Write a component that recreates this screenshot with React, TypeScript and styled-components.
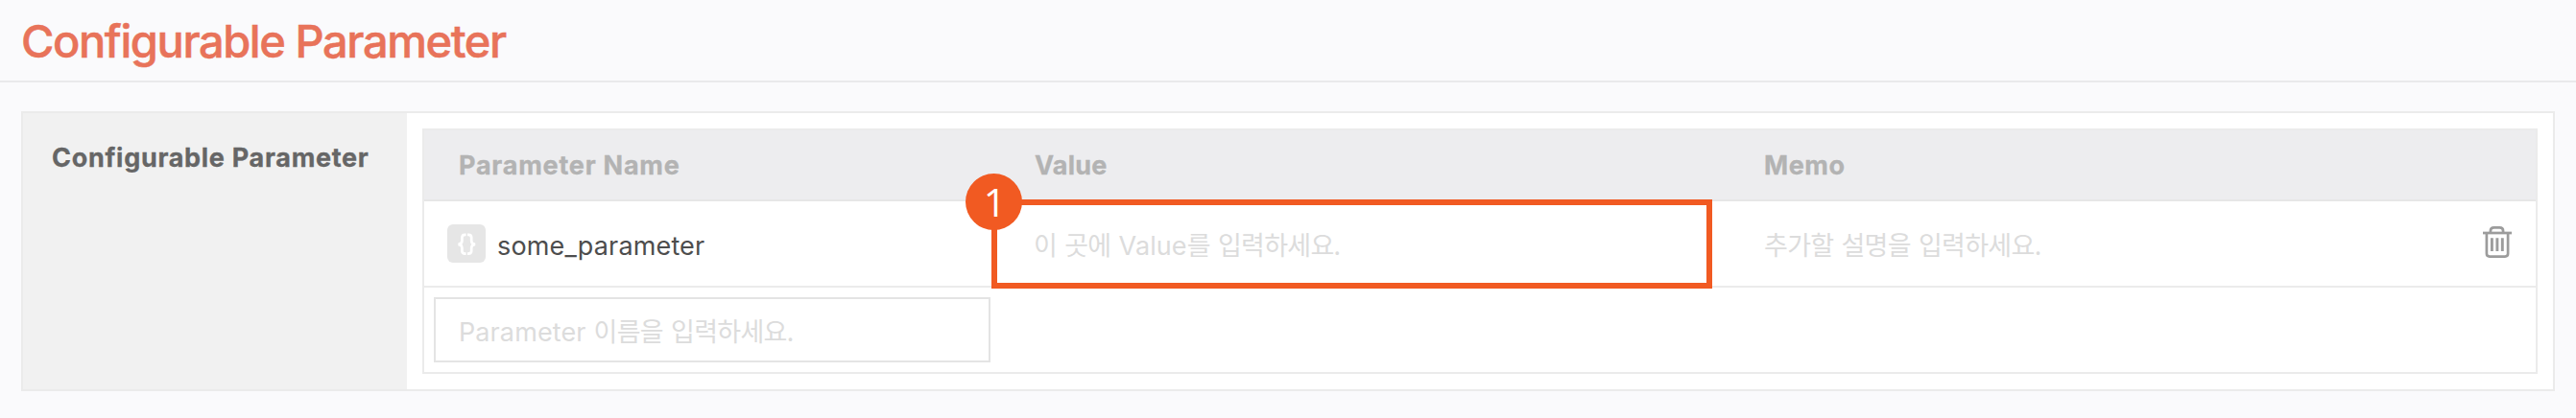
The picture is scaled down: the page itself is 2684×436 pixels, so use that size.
import React from 'react';
import styled, { createGlobalStyle } from 'styled-components';

const GlobalStyle = createGlobalStyle`
  *, *::before, *::after { box-sizing: border-box; }
  body {
    margin: 0;
    background: #fafafc;
    font-family: Inter, 'Noto Sans CJK KR', sans-serif;
    font-size: 27px;
    line-height: 34px;
  }
`;

const Page = styled.main`
  height: 436px;
  overflow: hidden;
  background: #fafafc;
`;

const TitleBar = styled.header`
  height: 86px;
  padding: 2px 22px 0;
  display: flex;
  align-items: center;
  border-bottom: 2px solid #e9e9eb;
`;

const Title = styled.h1`
  margin: 0;
  font-size: 47px;
  font-weight: 500;
  line-height: 56px;
  letter-spacing: -1.42px;
  color: #e8735a;
  -webkit-text-stroke: 0.5px #e8735a;
`;

const Panel = styled.section`
  margin: 30px 22px 0;
  height: 292px;
  display: flex;
  border: 2px solid #ebebeb;
  background: #fff;
`;

const PanelLabel = styled.div`
  width: 400px;
  flex: none;
  padding: 30px 0 0 30px;
  background: #f1f1f1;
  color: #666;
  font-weight: 700;
  letter-spacing: 0.7px;
  -webkit-text-stroke: 0.3px currentColor;
`;

const PanelBody = styled.div`
  flex: 1;
  padding: 16px;
`;

const Table = styled.div`
  border: 2px solid #ebebeb;
`;

const Row = styled.div<{ $height: number; $last?: boolean }>`
  display: grid;
  grid-template-columns: 591px 751px 1fr auto;
  align-items: stretch;
  height: ${(p) => p.$height}px;
  border-bottom: ${(p) => (p.$last ? 'none' : '2px solid #ebebeb')};
`;

const HeadRow = styled(Row)`
  padding-top: 2px;
  background: #ededef;
  border-bottom-color: #e6e6e6;
  color: #b3b3b3;
  font-weight: 700;
  -webkit-text-stroke: 0.3px currentColor;
`;

const Cell = styled.div<{ $indent: number; $spacing?: number }>`
  position: relative;
  display: flex;
  align-items: center;
  padding-left: ${(p) => p.$indent}px;
  letter-spacing: ${(p) => p.$spacing ?? 0}px;
`;

const Name = styled.span`
  margin: 5px 0 0 12px;
  color: #4d4d4d;
  letter-spacing: 0.15px;
`;

const Placeholder = styled.span`
  padding-top: 5px;
  color: #dcdcdc;
  letter-spacing: 0.1px;
  white-space: pre;
`;

const Korean = styled.span`
  font-family: 'Noto Sans CJK KR', sans-serif;
  line-height: 0;
  letter-spacing: -0.7px;
  word-spacing: 2.7px;
`;

const NameInput = styled.div`
  width: 580px;
  height: 68px;
  margin: 10px;
  padding-left: 24px;
  display: flex;
  align-items: center;
  border: 2px solid #e4e4e4;
`;

const Badge = styled.span`
  width: 40px;
  height: 40px;
  display: flex;
  border-radius: 6px;
  background: #e6e6e6;
`;

const Highlight = styled.div`
  position: absolute;
  inset: -2px 0 -3px 0;
  border: 6px solid #f15a22;
  z-index: 1;
`;

const Marker = styled.div`
  position: absolute;
  z-index: 2;
  left: -27px;
  top: -29px;
  width: 59px;
  height: 59px;
  padding-left: 2px;
  border-radius: 50%;
  background: #f15a22;
  color: #fff;
  font: 500 41px/59px 'Open Sans', sans-serif;
  text-align: center;
`;

const DeleteButton = styled.button`
  padding: 0 23px 0 0;
  border: 0;
  background: none;
  display: flex;
  align-items: center;
`;

const BracesIcon = () => (
  <svg width="40" height="40" viewBox="0 0 40 40" fill="none" stroke="#fff" strokeWidth="2.7">
    <path d="M19.6 10.9H18.4Q15.4 10.9 15.4 13.9V17.2Q15.4 20.6 11.4 20.8Q15.4 21 15.4 24.4V27.6Q15.4 30.7 18.4 30.7H19.6" />
    <path d="M21 10.9H22.2Q25.2 10.9 25.2 13.9V17.2Q25.2 20.6 29.2 20.8Q25.2 21 25.2 24.4V27.6Q25.2 30.7 22.2 30.7H21" />
  </svg>
);

const TrashIcon = () => (
  <svg width="34" height="40" viewBox="0 0 34 40" fill="none" stroke="#9c9c9c" strokeWidth="2.7">
    <path d="M2 9H32" />
    <path d="M9.9 8.4V7Q9.9 3.4 13.6 3.4H19.4Q23.1 3.4 23.1 7V8.4" />
    <path d="M5.9 9V30.6Q5.9 33.6 9 33.6H25Q28.1 33.6 28.1 30.6V9" />
    <path strokeWidth="2.9" d="M11.4 14.3V28M16.9 14.3V28M22.3 14.3V28" />
  </svg>
);

export default function App() {
  return (
    <Page>
      <GlobalStyle />
      <TitleBar>
        <Title>Configurable Parameter</Title>
      </TitleBar>
      <Panel>
        <PanelLabel>Configurable Parameter</PanelLabel>
        <PanelBody>
          <Table>
            <HeadRow $height={74}>
              <Cell $indent={36} $spacing={0.76}>Parameter Name</Cell>
              <Cell $indent={45} $spacing={0.2}>Value</Cell>
              <Cell $indent={54} $spacing={0.5}>Memo</Cell>
            </HeadRow>
            <Row $height={90}>
              <Cell $indent={24}>
                <Badge><BracesIcon /></Badge>
                <Name>some_parameter</Name>
              </Cell>
              <Cell $indent={44}>
                <Placeholder><Korean>이 곳에 </Korean>Value<Korean>를 입력하세요.</Korean></Placeholder>
                <Highlight />
                <Marker>1</Marker>
              </Cell>
              <Cell $indent={54}>
                <Placeholder><Korean>추가할 설명을 입력하세요.</Korean></Placeholder>
              </Cell>
              <DeleteButton aria-label="Delete"><TrashIcon /></DeleteButton>
            </Row>
            <Row $height={88} $last>
              <NameInput>
                <Placeholder>Parameter<Korean> 이름을 입력하세요.</Korean></Placeholder>
              </NameInput>
            </Row>
          </Table>
        </PanelBody>
      </Panel>
    </Page>
  );
}
